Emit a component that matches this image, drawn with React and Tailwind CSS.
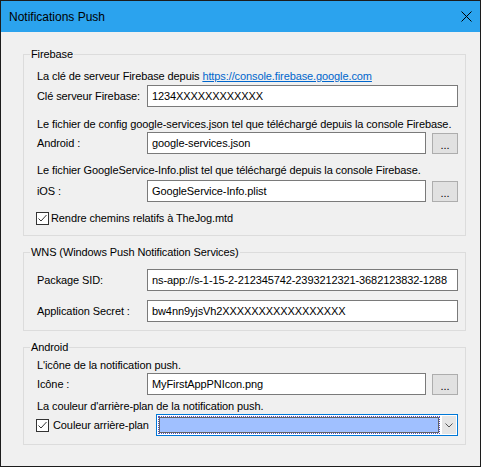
import React from 'react';

const font = { fontFamily: '"Liberation Sans", Arial, sans-serif' };

function TextRow({ children, className = '' }) {
  return <div className={`h-[16px] leading-[16px] pl-[13px] ${className}`}>{children}</div>;
}

function Field({ label, value, browse, className = '' }) {
  return (
    <div className={`flex items-center pl-[13px] pr-[7px] ${className}`}>
      <div className="w-[110px] shrink-0">{label}</div>
      <div className="flex-1 h-[22px] border border-[#7a7a7a] bg-white pl-[4px] leading-[20px] whitespace-nowrap overflow-hidden">
        {value}
      </div>
      {browse && (
        <button className="ml-[6px] w-[26px] h-[21px] border border-[#adadad] bg-[#e1e1e1] text-[11px] leading-[22px] text-black">
          ...
        </button>
      )}
    </div>
  );
}

function Checkbox() {
  return (
    <span className="w-[13px] h-[13px] border border-[#333] bg-white flex items-center justify-center shrink-0">
      <svg width="11" height="11" viewBox="0 0 11 11">
        <polyline points="1.5,5.5 4,8 9.5,2" fill="none" stroke="#333" strokeWidth="1" />
      </svg>
    </span>
  );
}

function Group({ title, children, className = '' }) {
  return (
    <fieldset className={`border border-[#dcdcdc] pb-[8px] ${className}`}>
      <legend className="ml-[6px] px-[1px] h-[16px] leading-[16px]">{title}</legend>
      {children}
    </fieldset>
  );
}

export default function App() {
  return (
    <div className="w-[481px] h-[467px] border border-[#1c1c1c] flex flex-col text-[11px] text-black tracking-[-0.1px]" style={font}>
      {/* Title bar */}
      <div className="h-[31px] bg-[#2ba3ee] flex items-center justify-between pl-[8px] pr-[4px] shrink-0">
        <span className="text-[12px] tracking-normal">Notifications Push</span>
        <svg width="11" height="11" viewBox="0 0 11 11" className="mr-[4px]">
          <path d="M0.5 0.5 L10.5 10.5 M10.5 0.5 L0.5 10.5" stroke="#000" strokeWidth="1" />
        </svg>
      </div>

      <div className="flex-1 bg-[#f0f0f0] pl-[22px] pr-[14px] pt-[14px]">
        <Group title="Firebase" className="pb-[9px]">
          <TextRow className="mt-[6px]">
            La clé de serveur Firebase depuis{' '}
            <a href="#" className="text-[#0066cc] underline">https://console.firebase.google.com</a>
          </TextRow>
          <Field className="mt-[1px]" label="Clé serveur Firebase:" value="1234XXXXXXXXXXXX" />
          <TextRow className="mt-[9px]">
            Le fichier de config google-services.json tel que téléchargé depuis la console Firebase.
          </TextRow>
          <Field label="Android :" value="google-services.json" browse />
          <TextRow className="mt-[8px]">
            Le fichier GoogleService-Info.plist tel que téléchargé depuis la console Firebase.
          </TextRow>
          <Field className="mt-[2px]" label="iOS :" value="GoogleService-Info.plist" browse />
          <div className="mt-[8px] h-[16px] flex items-center pl-[12px]">
            <Checkbox />
            <span className="ml-[2px] leading-[16px]">Rendre chemins relatifs à TheJog.mtd</span>
          </div>
        </Group>

        <Group title="WNS (Windows Push Notification Services)" className="mt-[8px]">
          <Field className="mt-[9px]" label="Package SID:" value="ns-app://s-1-15-2-212345742-2393212321-3682123832-1288" />
          <Field className="mt-[9px]" label="Application Secret :" value="bw4nn9yjsVh2XXXXXXXXXXXXXXXXX" />
        </Group>

        <Group title="Android" className="mt-[8px] pb-[4px]">
          <TextRow className="mt-[2px]">L'icône de la notification push.</TextRow>
          <Field label="Icône :" value="MyFirstAppPNIcon.png" browse />
          <TextRow className="mt-[3px]">La couleur d'arrière-plan de la notification push.</TextRow>
          <div className="flex items-center pl-[12px] pr-[7px]">
            <div className="w-[120px] shrink-0 flex items-center">
              <Checkbox />
              <span className="ml-[4px] leading-[16px]">Couleur arrière-plan</span>
            </div>
            {/* colour combobox */}
            <div className="flex-1 h-[22px] border border-[#0078d7] bg-white flex p-[1px]">
              <div className="flex-1 border border-dotted border-[#5050c0]">
                <div className="h-full border border-[#646464] bg-[#a0c0ff]" />
              </div>
              <div className="w-[14px] ml-[2px] bg-[#e5e5e5] flex items-center justify-center">
                <svg width="8" height="5" viewBox="0 0 8 5">
                  <polyline points="0.5,0.5 4,4 7.5,0.5" fill="none" stroke="#555" strokeWidth="1" />
                </svg>
              </div>
            </div>
          </div>
        </Group>
      </div>
    </div>
  );
}
